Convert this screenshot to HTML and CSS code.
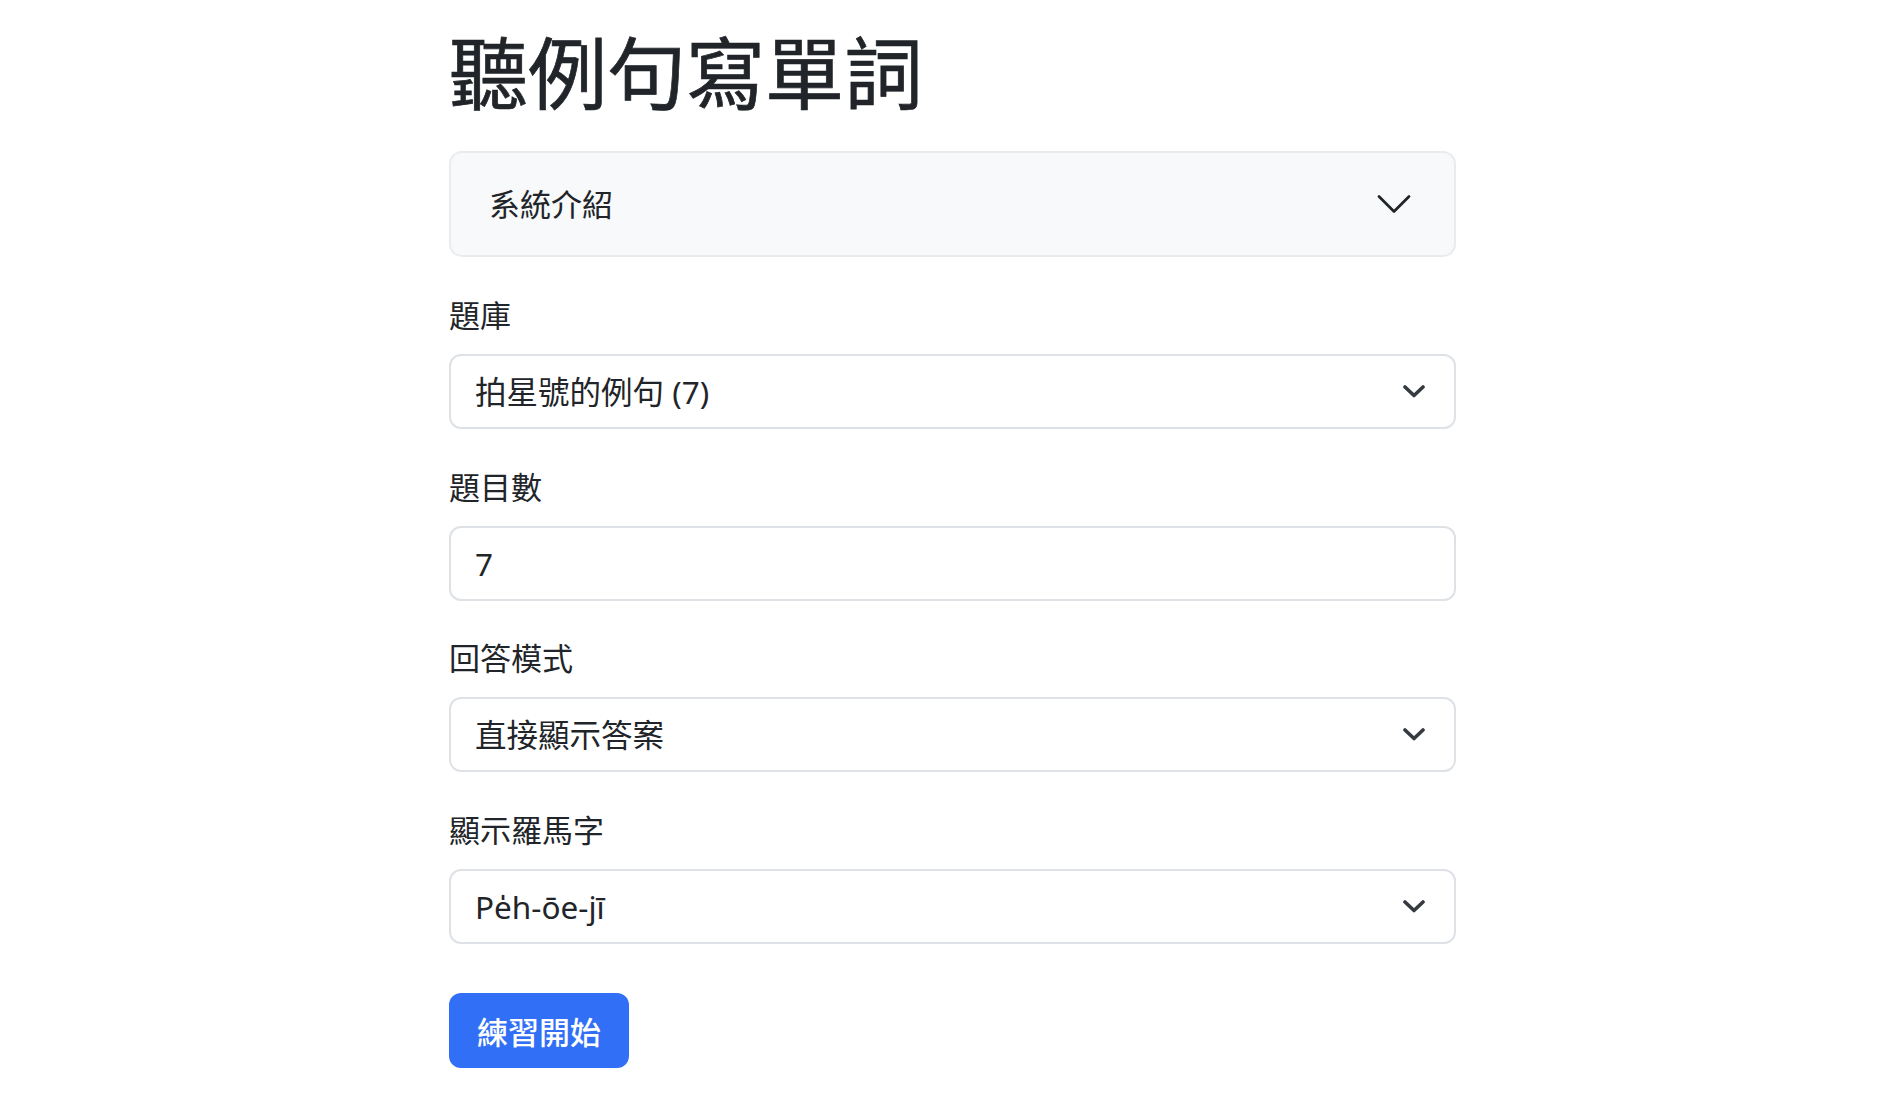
FILE: index.html
```html
<!DOCTYPE html>
<html lang="zh-Hant">
<head>
<meta charset="utf-8">
<title>聽例句寫單詞</title>
<link rel="stylesheet" href="styles.css">
</head>
<body>
<main class="page">
  <h1 class="title">聽例句寫單詞</h1>

  <div class="accordion">
    <button class="accordion-button" type="button">
      <span>系統介紹</span>
      <svg class="acc-icon" width="40" height="40" viewBox="0 0 16 16" fill="none" stroke="#212529" stroke-width="1.1" stroke-linecap="round" stroke-linejoin="round"><path d="M2 5L8 11L14 5"/></svg>
    </button>
  </div>

  <form class="form">
    <div class="field">
      <label class="label" for="bank">題庫</label>
      <div class="select-wrap">
        <select id="bank" class="control">
          <option>拍星號的例句 (7)</option>
        </select>
        <svg class="sel-icon" width="22" height="13" viewBox="0 0 22 13" fill="none" stroke="#343a40" stroke-width="3.6" stroke-linecap="round" stroke-linejoin="round"><path d="M2 2L11 10.5L20 2"/></svg>
      </div>
    </div>

    <div class="field">
      <label class="label" for="count">題目數</label>
      <input id="count" class="control" type="text" value="7">
    </div>

    <div class="field">
      <label class="label" for="mode">回答模式</label>
      <div class="select-wrap">
        <select id="mode" class="control">
          <option>直接顯示答案</option>
        </select>
        <svg class="sel-icon" width="22" height="13" viewBox="0 0 22 13" fill="none" stroke="#343a40" stroke-width="3.6" stroke-linecap="round" stroke-linejoin="round"><path d="M2 2L11 10.5L20 2"/></svg>
      </div>
    </div>

    <div class="field">
      <label class="label" for="roman">顯示羅馬字</label>
      <div class="select-wrap">
        <select id="roman" class="control">
          <option>Pe̍h-ōe-jī</option>
        </select>
        <svg class="sel-icon" width="22" height="13" viewBox="0 0 22 13" fill="none" stroke="#343a40" stroke-width="3.6" stroke-linecap="round" stroke-linejoin="round"><path d="M2 2L11 10.5L20 2"/></svg>
      </div>
    </div>

    <button class="btn-primary" type="button">練習開始</button>
  </form>
</main>
</body>
</html>
```

FILE: styles.css
```css
* {
  box-sizing: border-box;
}

html, body {
  margin: 0;
  padding: 0;
  background: #ffffff;
}

body {
  font-family: "Noto Sans", "Noto Sans CJK TC", sans-serif;
  color: #212529;
}

.page {
  width: 1007px;
  margin-left: 449px;
  padding-top: 22px;
}

.title {
  margin: 0 0 33px 0;
  font-family: "Noto Sans CJK TC", sans-serif;
  font-size: 79px;
  font-weight: 400;
  line-height: 96px;
  color: #212529;
  -webkit-text-stroke: 0.7px #212529;
  letter-spacing: 0;
}

.accordion {
  border: 2px solid #e9ecef;
  border-radius: 13px;
  background: #f8f9fa;
  overflow: hidden;
}

.accordion-button {
  display: flex;
  align-items: center;
  justify-content: space-between;
  width: 100%;
  height: 102px;
  padding: 0 40px 4px 38px;
  border: 0;
  background: transparent;
  font-family: "Noto Sans CJK TC", sans-serif;
  font-size: 31px;
  color: #212529;
  cursor: pointer;
  text-align: left;
}

.acc-icon {
  display: block;
  flex: none;
  margin-top: 4px;
}

.form {
  margin-top: 35px;
}

.field {
  margin-bottom: 34.5px;
}

.label {
  display: block;
  height: 43px;
  margin-bottom: 19px;
  font-family: "Noto Sans CJK TC", sans-serif;
  font-size: 31px;
  line-height: 43px;
  color: #212529;
}

.select-wrap {
  position: relative;
}

.control {
  display: block;
  width: 100%;
  height: 75px;
  padding: 0 64px 0 24px;
  border: 2px solid #dee2e6;
  border-radius: 12px;
  background: #ffffff;
  font-family: "Noto Sans", "Noto Sans CJK TC", sans-serif;
  font-size: 31.5px;
  color: #212529;
  -webkit-appearance: none;
  appearance: none;
  outline: none;
}

.sel-icon {
  position: absolute;
  right: 31px;
  top: 31px;
  pointer-events: none;
}

.btn-primary {
  display: inline-flex;
  align-items: center;
  justify-content: center;
  width: 180px;
  height: 75px;
  margin-top: 15px;
  padding: 0;
  border: 0;
  border-radius: 12px;
  background: #306ff6;
  color: #ffffff;
  font-family: "Noto Sans CJK TC", sans-serif;
  font-size: 31px;
  font-weight: 500;
  cursor: pointer;
}
```
